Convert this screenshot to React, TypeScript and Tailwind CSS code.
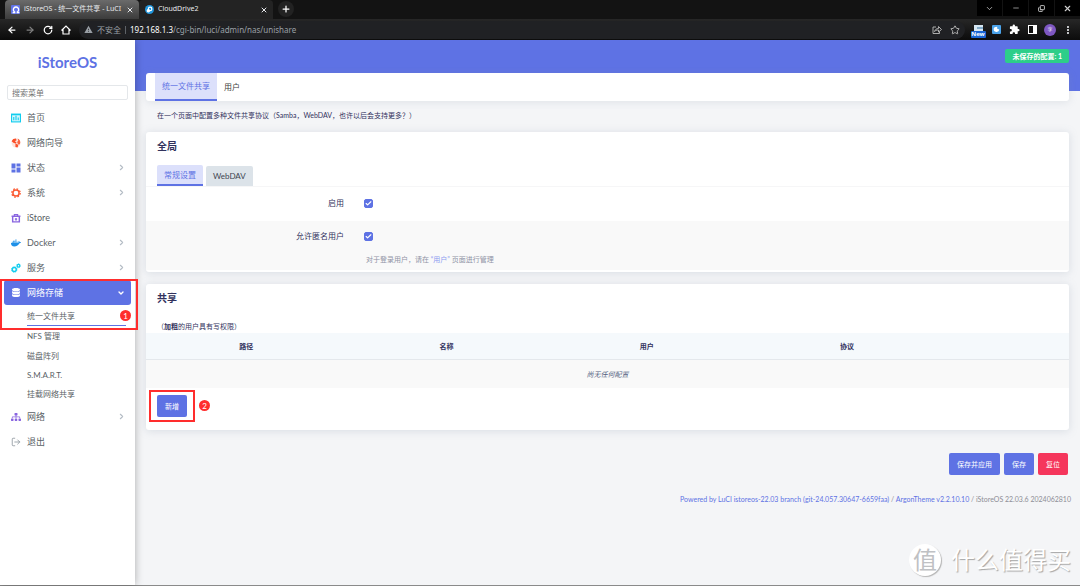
import type { ReactNode } from "react"
import {
  ArrowLeft, ArrowRight, Check, ChevronDown, ChevronRight, Copy, LogOut, Minus, Plus, RotateCw, Star, X,
} from "lucide-react"
import { FaDatabase, FaDocker, FaSitemap } from "react-icons/fa"
import { MdDashboard, MdExtension, MdMoreVert, MdWarning } from "react-icons/md"

type MenuItem = { label: string; icon: ReactNode; expandable?: boolean }

const topMenu: MenuItem[] = [
  {
    label: "首页",
    icon: (
      <svg viewBox="0 0 18 18" className="size-[10px]">
        <rect x="1" y="2" width="16" height="14" fill="#d5f6fc" stroke="#11cdef" strokeWidth="2" />
        <path d="M1 3h16M5 7v6M9 5v8M13 8v5" stroke="#11cdef" strokeWidth="2" />
      </svg>
    ),
  },
  {
    label: "网络向导",
    icon: (
      <svg viewBox="0 0 18 18" className="size-[10px]">
        <circle cx="9" cy="9" r="8" fill="#fde3dc" />
        <path d="M1 6l3-4 5-1 1 3-3 2 3 2-1 2-4-1z" fill="#fb4f28" />
        <path d="M12 1c4 2 6 6 4 10l-2 1-2-2-1-3 2-2z" fill="#fb6340" />
        <path d="M8 10l5 2-1 5-4-1z" fill="#fb4f28" />
      </svg>
    ),
  },
  { label: "状态", icon: <MdDashboard className="size-3 text-[#5e72e4]" />, expandable: true },
  {
    label: "系统",
    icon: (
      <svg viewBox="0 0 20 20" className="size-[10px]" fill="none" stroke="#fb5a33">
        <circle cx="10" cy="10" r="6.2" strokeWidth="3" />
        <circle cx="10" cy="10" r="8.4" strokeWidth="2.6" strokeDasharray="3.3 3.3" />
      </svg>
    ),
    expandable: true,
  },
  {
    label: "iStore",
    icon: (
      <svg viewBox="0 0 18 18" className="size-[10px]" fill="none" stroke="#8965e0" strokeWidth="2">
        <path d="M1 6h16M3 6v10h12V6" strokeWidth="2.6" />
        <path d="M6 6V3h6v3M9 9v5M7 11h4" />
      </svg>
    ),
  },
  { label: "Docker", icon: <FaDocker className="size-[10px] text-[#1d90e8]" />, expandable: true },
  {
    label: "服务",
    icon: (
      <svg viewBox="0 0 20 20" className="size-[10px]" fill="none" stroke="#11cdef">
        <circle cx="6.5" cy="13" r="4" strokeWidth="3" />
        <circle cx="6.5" cy="13" r="5.6" strokeWidth="1.6" strokeDasharray="2.2 2.2" />
        <circle cx="15" cy="5.5" r="2.6" strokeWidth="2.6" />
        <circle cx="15" cy="5.5" r="4" strokeWidth="1.4" strokeDasharray="1.6 1.6" />
      </svg>
    ),
    expandable: true,
  },
]

const bottomMenu: MenuItem[] = [
  { label: "网络", icon: <FaSitemap className="size-[10px] text-[#8965e0]" />, expandable: true },
  { label: "退出", icon: <LogOut className="size-[10px] text-[#8f979f]" /> },
]

const columns = ["路径", "名称", "用户", "协议"]

function MenuRow({ item }: { item: MenuItem }) {
  return (
    <a href="#" className="flex h-[25px] items-center pl-[10px] pr-[9px] text-[9px] text-[#5a5f66]">
      <span className="mr-[5px] flex w-3 justify-center">{item.icon}</span>
      <span className="flex-1">{item.label}</span>
      {item.expandable && <ChevronRight strokeWidth={3} className="size-[9px] text-[#b4bcc5]" />}
    </a>
  )
}

function CheckBox({ id }: { id: string }) {
  return (
    <span className="relative mt-[2px] block size-[9px]">
      <input
        id={id}
        type="checkbox"
        defaultChecked
        className="peer block size-[9px] appearance-none rounded-[2px] border border-[#5e72e4] checked:bg-[#5e72e4]"
      />
      <Check strokeWidth={4} className="pointer-events-none absolute inset-[1px] hidden size-[7px] text-white peer-checked:block" />
    </span>
  )
}

function ToolbarCell({ children }: { children: ReactNode }) {
  return <span className="flex w-[18px] items-center justify-center">{children}</span>
}

function BrowserBar() {
  return (
    <header className="bg-[#131313] font-['Noto_Sans','Noto_Sans_CJK_SC',sans-serif] text-[8px] text-[#e8eaed]">
      <div className="flex h-[19px] pl-[5px]">
        <div className="flex w-[134px] items-center rounded-t bg-gradient-to-b from-[#6b6b6b] to-[#3c3c3c] pl-[6px] pr-[5px] text-[7px]">
          <span className="mr-1 flex size-[9px] items-center justify-center rounded-[1px] bg-[#6173e8]">
            <svg viewBox="0 0 12 12" className="size-2" fill="none" stroke="#fff" strokeWidth="2">
              <path d="M1 10h3V9a4 4 0 1 1 4 0v1h3" />
            </svg>
          </span>
          <span className="flex-1 whitespace-nowrap">iStoreOS - 统一文件共享 - LuCI</span>
          <X strokeWidth={3} className="size-2" />
        </div>
        <div className="flex w-[134px] items-center rounded-t bg-[#232323] pl-[6px] pr-[5px] text-[7px]">
          <span className="mr-1 flex size-[9px] items-center justify-center rounded-full bg-[#2196dc]">
            <svg viewBox="0 0 12 12" className="size-[7px]" fill="none" stroke="#fff" strokeWidth="2">
              <circle cx="7" cy="5" r="3" />
              <circle cx="4" cy="8" r="2" fill="#fff" />
            </svg>
          </span>
          <span className="flex-1">CloudDrive2</span>
          <X strokeWidth={3} className="size-2" />
        </div>
        <button aria-label="New tab" className="ml-[5px] mt-px flex size-[16px] items-center justify-center rounded-full bg-[#222]">
          <Plus strokeWidth={3} className="size-[10px] text-white" />
        </button>
        <div className="ml-auto flex h-4 gap-px text-[#d0d0d0]">
          <button aria-label="Tabs" className="flex w-[25px] items-center justify-center bg-black"><ChevronDown className="size-[9px]" /></button>
          <button aria-label="Minimize" className="flex w-[25px] items-center justify-center bg-black"><Minus className="size-2" /></button>
          <button aria-label="Restore" className="flex w-[25px] items-center justify-center bg-black"><Copy className="size-[7px] -scale-y-100" strokeWidth={3} /></button>
          <button aria-label="Close" className="flex w-[25px] items-center justify-center bg-black"><X className="size-[9px]" strokeWidth={3} /></button>
        </div>
      </div>
      <div className="flex h-[21px] items-center bg-gradient-to-b from-[#272727] to-[#0c0c0c] pl-[7px] pr-[3px]">
        <div className="flex w-[72px] gap-2">
          <ArrowLeft strokeWidth={3} className="size-[10px] text-white" />
          <ArrowRight strokeWidth={3} className="size-[10px] text-[#808080]" />
          <RotateCw strokeWidth={3} className="size-[10px] text-white" />
          <svg viewBox="0 0 20 20" className="size-[10px]" fill="none" stroke="#fff" strokeWidth="2.4">
            <path d="M1 11l9-9 9 9M4 9v9h12V9" />
          </svg>
        </div>
        <div className="flex h-[18px] flex-1 items-center rounded-full bg-[#202124] px-[5px]">
          <MdWarning className="mr-1 size-[9px] text-[#9aa0a6]" />
          <span className="text-[#9aa0a6]">不安全</span>
          <span className="mx-1 h-2 w-px bg-[#5f6368]" />
          <span className="flex-1 text-[#9aa0a6]"><span className="text-white">192.168.1.3</span>/cgi-bin/luci/admin/nas/unishare</span>
          <svg viewBox="0 0 20 20" className="mr-2 size-[10px]" fill="none" stroke="#bbb" strokeWidth="1.8">
            <path d="M8 4H2v13h13v-4" />
            <path d="M5 13c1-4 4-6 8-6V3l6 6-6 5v-4c-4 0-6 1-8 3z" />
          </svg>
          <Star className="size-[10px] text-[#ccc]" />
        </div>
        <div className="ml-1 flex items-center">
          <ToolbarCell>
            <span className="flex h-4 w-[15px] flex-col items-center pt-[3px]">
              <svg viewBox="0 0 9 6" className="h-[6px] w-[9px]">
                <rect width="9" height="6" fill="#d6e6f2" />
                <path d="M3 3h6" stroke="#2f6f9e" strokeWidth="1" />
              </svg>
              <span className="w-full rounded-[1px] bg-[#1a66d8] text-center text-[6px] leading-[7px] font-bold text-white">New</span>
            </span>
          </ToolbarCell>
          <ToolbarCell>
            <span className="flex size-[9px] items-center justify-center rounded-[1px] bg-[#4ba3ea]">
              <svg viewBox="0 0 10 10" className="size-[7px]">
                <path d="M1 4a4 4 0 0 0 8 1L6 4V1C3 1 1 2 1 4z" fill="#fff" />
              </svg>
            </span>
          </ToolbarCell>
          <ToolbarCell><MdExtension className="size-[11px] text-white" /></ToolbarCell>
          <ToolbarCell>
            <span className="flex size-[9px] justify-end border-[1px] border-white bg-[#111]"><span className="h-full w-[3px] bg-white" /></span>
          </ToolbarCell>
          <ToolbarCell>
            <span className="flex size-3 items-center justify-center rounded-full bg-[#7e57c2] text-[5px]">李</span>
          </ToolbarCell>
          <ToolbarCell><MdMoreVert className="size-3" /></ToolbarCell>
        </div>
      </div>
    </header>
  )
}

function Sidebar() {
  return (
    <aside className="relative z-10 w-[135px] shrink-0 bg-white shadow-[0_0_8px_rgba(0,0,0,0.3)]">
      <h1 className="pt-3 text-center text-[15px] leading-5 font-bold text-[#5e72e4]">iStoreOS</h1>
      <div className="px-[7px] pt-[13px]">
        <input
          aria-label="搜索菜单"
          placeholder="搜索菜单"
          className="block h-[15px] w-full rounded-[2px] border border-[#e4e7ea] px-1 text-[8px] placeholder:text-[#757575]"
        />
      </div>
      <nav className="pt-[5px]">
        {topMenu.map((item) => <MenuRow key={item.label} item={item} />)}
        <div className="relative">
          <a href="#" className="mx-1 flex h-[25px] items-center rounded-[3px] bg-[#5e72e4] px-[6px] text-[9px] text-white">
            <FaDatabase className="mr-[5px] w-3" />
            <span className="flex-1">网络存储</span>
            <ChevronDown strokeWidth={4} className="size-2" />
          </a>
          <div className="mt-px pl-[27px] pr-[9px] text-[8px] text-[#5a5f66]">
            <a href="#" className="flex h-5 items-center border-b border-[#5e72e4]">统一文件共享</a>
            <a href="#" className="flex h-5 items-center">NFS 管理</a>
            <a href="#" className="flex h-5 items-center">磁盘阵列</a>
            <a href="#" className="flex h-[18px] items-center">S.M.A.R.T.</a>
            <a href="#" className="flex h-5 items-center">挂载网络共享</a>
          </div>
          {/* step 1 callout */}
          <div className="pointer-events-none absolute -right-[3px] -top-px left-0 h-[51px] border-2 border-[#ff2d2d]" />
          <span className="absolute right-1 top-[30px] flex size-[11px] items-center justify-center rounded-full bg-[#ff2d2d] text-[8px] text-white">1</span>
        </div>
        {bottomMenu.map((item) => <MenuRow key={item.label} item={item} />)}
      </nav>
    </aside>
  )
}

function GlobalCard() {
  return (
    <section className="rounded-[3px] bg-white pb-[2px] shadow-[0_1px_8px_rgba(136,152,170,0.25)]">
      <h2 className="px-[11px] pt-[6px] text-[10px] leading-4 font-bold text-[#32325d]">全局</h2>
      <div className="flex items-end gap-[3px] px-[11px] pt-[11px] text-[8px]">
        <button className="h-[21px] rounded-t-[2px] border-b-2 border-[#5e72e4] bg-[#dce0fb] px-[7px] text-[#5e72e4]">常规设置</button>
        <button className="h-5 rounded-t-[2px] bg-[#dce3e9] px-[7px] text-[#404550]">WebDAV</button>
      </div>
      <div className="border-t border-[#f6f6f7] text-[8px] text-[#32325d]">
        <div className="flex h-[34px] gap-5 pt-[10px] leading-3">
          <label htmlFor="enabled" className="w-[198px] text-right">启用</label>
          <CheckBox id="enabled" />
        </div>
        <div className="flex h-[49px] gap-5 bg-[#f9f9f9] pt-[9px] leading-3">
          <label htmlFor="anonymous" className="w-[198px] text-right">允许匿名用户</label>
          <div>
            <CheckBox id="anonymous" />
            <p className="pl-[2px] pt-3 text-[7px] text-[#8f93a5]">
              对于登录用户，请在 <a href="#" className="text-[#8c9bf0]">“用户”</a> 页面进行管理
            </p>
          </div>
        </div>
      </div>
    </section>
  )
}

function ShareCard() {
  return (
    <section className="mt-3 rounded-[3px] bg-white pb-[13px] shadow-[0_1px_8px_rgba(136,152,170,0.25)]">
      <h2 className="px-[11px] pt-[6px] text-[10px] leading-4 font-bold text-[#32325d]">共享</h2>
      <p className="px-[11px] pt-[14px] text-[7px] leading-[13px] text-[#32325d]">（<b>加粗</b>的用户具有写权限）</p>
      <table className="w-full table-fixed text-[7px] text-[#32325d]">
        <colgroup>
          {columns.map((name) => <col key={name} className="w-[21.7%]" />)}
          <col />
        </colgroup>
        <thead>
          <tr className="h-[26px] border-b border-[#e4e8ec] bg-[#f5f9fc]">
            {columns.map((name) => <th key={name} className="p-0 font-bold">{name}</th>)}
            <th />
          </tr>
        </thead>
        <tbody>
          <tr className="h-[29px] bg-[#f9f9f9]">
            <td colSpan={5} className="p-0 text-center text-[#525f7f]"><em>尚无任何配置</em></td>
          </tr>
        </tbody>
      </table>
      <div className="px-[11px] pt-[7px]">
        <div className="relative w-[30px]">
          <button className="block h-[22px] w-full rounded-[2px] bg-[#5e72e4] text-[7px] text-white">新增</button>
          {/* step 2 callout */}
          <div className="pointer-events-none absolute -inset-x-2 -inset-y-[5px] border-2 border-[#ff2d2d]" />
          <span className="absolute left-[42px] top-[5px] flex size-[11px] items-center justify-center rounded-full bg-[#ff2d2d] text-[8px] text-white">2</span>
        </div>
      </div>
    </section>
  )
}

export default function App() {
  return (
    <div className="flex min-h-screen flex-col bg-[#f4f5f7] font-['Lato','Noto_Sans_CJK_SC',sans-serif]">
      <BrowserBar />
      <div className="relative flex flex-1 border-b border-[#8a8a8a]">
        <Sidebar />
        <main className="min-w-0 flex-1">
          <div className="h-[51px] bg-[#5e72e4] px-[11px] pt-[9px]">
            <div className="flex justify-end">
              <button className="h-[14px] rounded-[2px] bg-[#2dce89] px-[7px] text-[7px] font-bold text-white">未保存的配置: 1</button>
            </div>
          </div>
          <div className="-mt-[18px] px-[11px]">
            <div className="flex h-7 rounded-[3px] bg-white px-[9px] text-[8px] shadow-[0_1px_8px_rgba(136,152,170,0.2)]">
              <a href="#" className="flex items-center border-b-2 border-[#5e72e4] bg-[#dce0fb] px-[7px] text-[#5e72e4]">统一文件共享</a>
              <a href="#" className="flex items-center px-[7px] text-[#404040]">用户</a>
            </div>
            <p className="px-[11px] pt-2 pb-[10px] text-[7px] leading-[13px] text-[#32325d]">
              在一个页面中配置多种文件共享协议（Samba，WebDAV，也许以后会支持更多？）
            </p>
            <GlobalCard />
            <ShareCard />
            <div className="flex justify-end gap-1 pt-[23px] pr-px text-[7px] text-white">
              <button className="h-[22px] rounded-[2px] bg-[#5e72e4] px-2">保存并应用</button>
              <button className="h-[22px] rounded-[2px] bg-[#5e72e4] px-2">保存</button>
              <button className="h-[22px] rounded-[2px] bg-[#f5365c] px-2">复位</button>
            </div>
          </div>
          <footer className="px-[9px] pt-[18px] text-right text-[7px] leading-3 text-[#8e8e96]">
            <a href="#" className="text-[#5e72e4]">Powered by LuCI istoreos-22.03 branch (git-24.057.30647-6659faa)</a> /{" "}
            <a href="#" className="text-[#5e72e4]">ArgonTheme v2.2.10.10</a> / iStoreOS 22.03.6 2024062810
          </footer>
        </main>
        <div className="absolute right-[9px] bottom-[9px] flex items-center gap-[10px] text-white">
          <span className="flex size-8 items-center justify-center rounded-full bg-white text-[24px] leading-none text-[#bfc1c4] shadow-[1px_1px_1px_#b5b5b5]">值</span>
          <span className="text-[24px] leading-8 [text-shadow:1px_1px_1px_#a5a5a5]">什么值得买</span>
        </div>
      </div>
    </div>
  )
}
